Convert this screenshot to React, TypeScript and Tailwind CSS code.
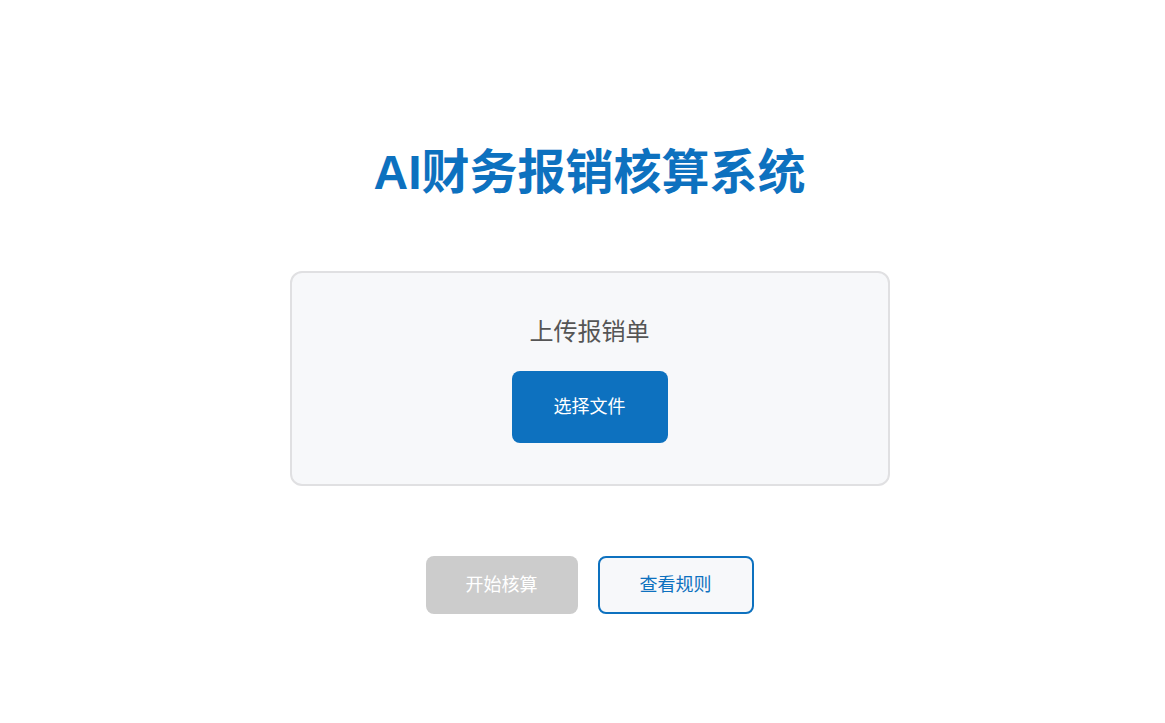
export default function App() {
  return (
    <div
      className="min-h-screen bg-white flex flex-col items-center pt-[144px] pl-[14px]"
      style={{ fontFamily: '"Liberation Sans", "Microsoft YaHei", "Noto Sans CJK SC", sans-serif' }}
    >
      <h1 className="text-[48px] leading-[58px] font-bold text-[#0d71bf]">
        AI财务报销核算系统
      </h1>

      {/* upload card */}
      <div className="mt-[69px] w-[600px] h-[215px] rounded-xl border-2 border-[#e0e0e2] bg-[#f7f8fa] flex flex-col items-center pt-[41px]">
        <h2 className="text-[24px] leading-[36px] text-[#555]">上传报销单</h2>
        <button className="mt-[21px] w-[156px] h-[72px] rounded-lg bg-[#0d71bf] text-white text-[18px]">
          选择文件
        </button>
      </div>

      {/* actions */}
      <div className="mt-[70px] flex items-center gap-[20px]">
        <button
          disabled
          className="w-[152px] h-[58px] rounded-lg bg-[#cccccc] text-white text-[18px] cursor-not-allowed"
        >
          开始核算
        </button>
        <button className="w-[156px] h-[58px] rounded-lg border-2 border-[#0d71bf] bg-[#f7f8fa] text-[#0d71bf] text-[18px]">
          查看规则
        </button>
      </div>
    </div>
  );
}
